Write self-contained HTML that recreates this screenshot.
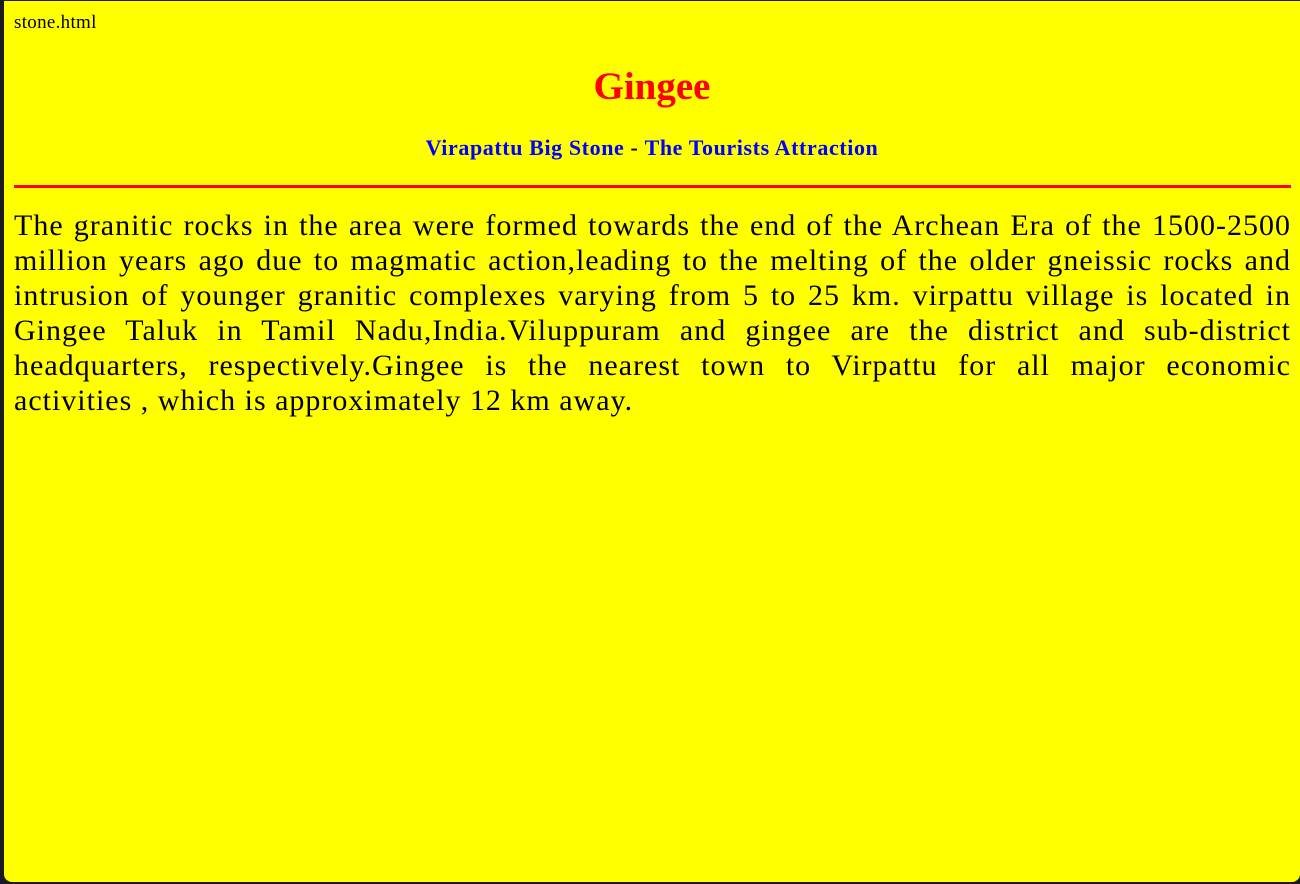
<!DOCTYPE html>
<html><head><style>
html,body{margin:0;padding:0;background:#1b1b1f;width:1300px;height:884px;overflow:hidden}
.p{position:absolute;left:4px;top:1px;width:1296px;height:881px;background:#ffff00;border-radius:0 0 8px 8px;font-family:"Liberation Serif",serif}
.f{position:absolute;left:10px;top:11px;font-size:19px;letter-spacing:0.3px;color:#000}
h1{position:absolute;left:0;width:1296px;top:63px;margin:0;text-align:center;color:#ff0000;font-size:39px;font-weight:bold}
h3{position:absolute;left:0;width:1296px;top:134px;margin:0;text-align:center;font-size:22px;letter-spacing:0.6px;font-weight:bold;color:#000}
h3 b{color:#0000ff}
.hr{position:absolute;left:10px;width:1277px;top:184px;height:3px;background:#ff0000}
.t{position:absolute;left:10px;top:207px;width:1277px;font-size:30px;letter-spacing:1px;line-height:35px;color:#000}
.t div{text-align:justify;text-align-last:justify;white-space:nowrap}
.t div.l{text-align-last:left}
</style></head><body><div class="p">
<div class="f">stone.html</div>
<h1>Gingee</h1>
<h3><b>Virapattu Big Stone</b> - <b>The Tourists Attraction</b></h3>
<div class="hr"></div>
<div class="t">
<div>The granitic rocks in the area were formed towards the end of the Archean Era of the 1500-2500</div>
<div>million years ago due to magmatic action,leading to the melting of the older gneissic rocks and</div>
<div>intrusion of younger granitic complexes varying from 5 to 25 km. virpattu village is located in</div>
<div>Gingee Taluk in Tamil Nadu,India.Viluppuram and gingee are the district and sub-district</div>
<div>headquarters, respectively.Gingee is the nearest town to Virpattu for all major economic</div>
<div class="l">activities , which is approximately 12 km away.</div>
</div>
</div></body></html>
